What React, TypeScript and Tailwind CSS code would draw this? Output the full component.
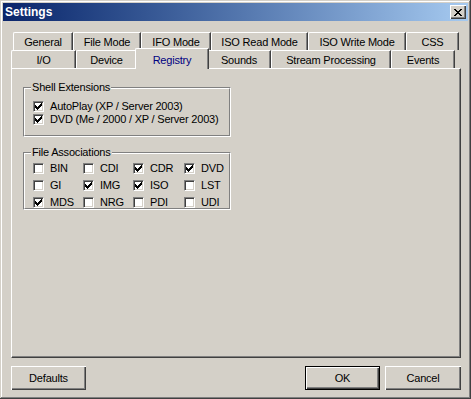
import React from "react";

const font = { fontFamily: '"Liberation Sans", Arial, sans-serif' };

const backRow = [
  { label: "General", w: "w-[60px]" },
  { label: "File Mode", w: "w-[68px]" },
  { label: "IFO Mode", w: "w-[70px]" },
  { label: "ISO Read Mode", w: "w-[97px]" },
  { label: "ISO Write Mode", w: "w-[98px]" },
  { label: "CSS", w: "w-[53px]" },
];

const frontRow = [
  { label: "I/O", w: "w-[65px]" },
  { label: "Device", w: "w-[61px]" },
  { label: "Registry", w: "w-[74px]", active: true },
  { label: "Sounds", w: "w-[64px]" },
  { label: "Stream Processing", w: "w-[120px]" },
  { label: "Events", w: "w-[64px]" },
];

const assoc = [
  ["BIN", false], ["CDI", false], ["CDR", true], ["DVD", true],
  ["GI", false], ["IMG", true], ["ISO", true], ["LST", false],
  ["MDS", true], ["NRG", false], ["PDI", false], ["UDI", false],
] as const;

function Check({ checked }: { checked: boolean }) {
  return (
    <div className="w-[11px] h-[11px] shrink-0 bg-white border-t border-l border-[#808080] border-b border-r border-b-white border-r-white shadow-[inset_1px_1px_#404040,inset_-1px_-1px_#d4d0c8] flex items-center justify-center">
      {checked && (
        <svg width="7" height="7" viewBox="0 0 7 7" shapeRendering="crispEdges">
          <path d="M6 0h1v3h-1v1h-1v1h-1v1h-1v1h-1v-1h-1v-1h-1v-3h1v1h1v1h1v-1h1v-1h1z" fill="#000" />
        </svg>
      )}
    </div>
  );
}

function Tab({ label, w, active }: { label: string; w: string; active?: boolean }) {
  if (active) {
    return (
      <div
        className={`${w} relative z-10 -mt-[2px] -mb-[1px] -mx-[2px] h-[21px] bg-[#d4d0c8] border-t border-l border-white rounded-tl-[2px] border-r border-r-[#404040] shadow-[inset_-1px_0_#808080] flex items-start justify-center pt-[3px] text-[#000080]`}
      >
        {label}
      </div>
    );
  }
  return (
    <div
      className={`${w} h-[18px] bg-[#d4d0c8] border-t border-l border-white rounded-tl-[2px] border-r border-r-[#404040] shadow-[inset_-1px_0_#808080] flex items-center justify-center pt-[1px]`}
    >
      {label}
    </div>
  );
}

function Group({ title, className, children }: { title: string; className: string; children: React.ReactNode }) {
  return (
    <div className={`relative w-[208px] border-t border-l border-[#808080] border-b border-r border-b-white border-r-white ${className}`}>
      <div className="h-full border-t border-l border-white border-b border-r border-b-[#808080] border-r-[#808080]">
        <span className="absolute -top-[8px] left-[7px] px-[1px] bg-[#d4d0c8] leading-[14px]">{title}</span>
        {children}
      </div>
    </div>
  );
}

function Button({ label, w, isDefault }: { label: string; w: string; isDefault?: boolean }) {
  return (
    <div
      className={`${w} h-[24px] flex items-center justify-center bg-[#d4d0c8] ${
        isDefault
          ? "border border-black shadow-[inset_1px_1px_#fff,inset_-1px_-1px_#404040,inset_-2px_-2px_#808080]"
          : "shadow-[inset_1px_1px_#fff,inset_-1px_-1px_#404040,inset_-2px_-2px_#808080]"
      }`}
    >
      {label}
    </div>
  );
}

export default function App() {
  return (
    <div
      style={font}
      className="w-[471px] h-[399px] bg-[#d4d0c8] text-[11px] tracking-[-0.2px] text-black p-[3px] flex flex-col shadow-[inset_-1px_-1px_#404040,inset_1px_1px_#d4d0c8,inset_-2px_-2px_#808080,inset_2px_2px_#fff]"
    >
      {/* Title bar */}
      <div className="h-[18px] bg-gradient-to-r from-[#0a246a] to-[#a6caf0] flex items-center justify-between pl-[2px] pr-[2px]">
        <span className="text-white font-bold text-[12px] tracking-normal leading-none">Settings</span>
        <div className="w-[16px] h-[14px] bg-[#d4d0c8] shadow-[inset_1px_1px_#fff,inset_-1px_-1px_#404040,inset_-2px_-2px_#808080] flex items-center justify-center">
          <svg width="8" height="7" viewBox="0 0 8 7" shapeRendering="crispEdges">
            <path d="M0 0h2v1h1v1h2v-1h1v-1h2v1h-1v1h-1v1h-1v1h1v1h1v1h1v1h-2v-1h-1v-1h-2v1h-1v1h-2v-1h1v-1h1v-1h1v-1h-1v-1h-1v-1h-1z" fill="#000" />
          </svg>
        </div>
      </div>

      <div className="flex flex-col pl-[8px] pr-[7px] mt-[11px]">
        {/* Tabs */}
        <div className="flex pl-[2px]">
          {backRow.map((t) => (
            <Tab key={t.label} {...t} />
          ))}
        </div>
        <div className="flex">
          {frontRow.map((t) => (
            <Tab key={t.label} {...t} />
          ))}
        </div>

        {/* Panel */}
        <div className="h-[290px] border-t border-l border-white border-r border-b border-r-[#404040] border-b-[#404040] shadow-[inset_-1px_-1px_#808080] pl-[11px] pt-[18px] flex flex-col">
          <Group title="Shell Extensions" className="h-[50px]">
            <div className="flex flex-col pl-[8px] pt-[12px] gap-[2px]">
              <label className="flex items-center gap-[6px] h-[11px]">
                <Check checked />
                <span>AutoPlay (XP / Server 2003)</span>
              </label>
              <label className="flex items-center gap-[6px] h-[11px]">
                <Check checked />
                <span>DVD (Me / 2000 / XP / Server 2003)</span>
              </label>
            </div>
          </Group>

          <Group title="File Associations" className="h-[58px] mt-[15px]">
            <div className="grid grid-cols-[50px_50px_51px_40px] gap-y-[5px] pl-[8px] pt-[8px]">
              {assoc.map(([name, on]) => (
                <label key={name} className="flex items-center gap-[6px] h-[12px]">
                  <Check checked={on} />
                  <span>{name}</span>
                </label>
              ))}
            </div>
          </Group>
        </div>

        {/* Buttons */}
        <div className="flex items-center mt-[8px]">
          <Button label="Defaults" w="w-[75px]" />
          <div className="flex-1" />
          <Button label="OK" w="w-[75px]" isDefault />
          <div className="w-[5px]" />
          <Button label="Cancel" w="w-[76px]" />
        </div>
      </div>
    </div>
  );
}
